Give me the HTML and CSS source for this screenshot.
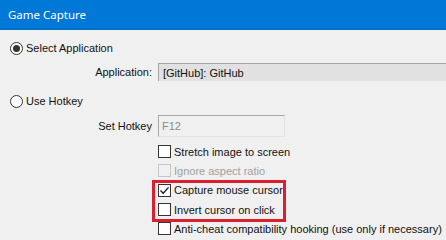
FILE: index.html
```html
<!DOCTYPE html>
<html lang="en">
<head>
    <title>Game Capture</title>
    <link rel="stylesheet" href="styles.css">
</head>
<body>
    <div class="titlebar">Game Capture</div>
    <div class="panel">
        <div class="radio-row first">
            <span class="radio checked"></span>
            <span>Select Application</span>
        </div>
        <div class="form-row app-row">
            <span class="label">Application:</span>
            <div class="combo">[GitHub]: GitHub</div>
        </div>
        <div class="radio-row second">
            <span class="radio"></span>
            <span>Use Hotkey</span>
        </div>
        <div class="form-row hotkey-row">
            <span class="label">Set Hotkey</span>
            <div class="hotkey">F12</div>
        </div>
        <div class="checks">
            <div class="check-row">
                <span class="box"></span>
                <span>Stretch image to screen</span>
            </div>
            <div class="check-row disabled">
                <span class="box"></span>
                <span>Ignore aspect ratio</span>
            </div>
            <div class="highlight">
                <div class="check-row">
                    <span class="box">
                        <svg width="11" height="11" viewBox="0 0 11 11"><path d="M1.5 5.5 L4.2 8.3 L9.6 2.4" fill="none" stroke="#1a1a1a" stroke-width="1.3"/></svg>
                    </span>
                    <span>Capture mouse cursor</span>
                </div>
                <div class="check-row">
                    <span class="box"></span>
                    <span>Invert cursor on click</span>
                </div>
            </div>
            <div class="check-row">
                <span class="box"></span>
                <span>Anti-cheat compatibility hooking (use only if necessary)</span>
            </div>
        </div>
    </div>
</body>
</html>
```

FILE: styles.css
```css
body{
    margin: 0;
    width: 446px;
    height: 240px;
    overflow: hidden;
    background-color: #f0f0f0;
    font-family: "Liberation Sans", Arial, sans-serif;
    font-size: 11px;
    color: #111;
}
.titlebar{
    height: 28px;
    background-color: #0078d7;
    border-bottom: 2px solid #006fc8;
    color: #ffffff;
    font-family: "Noto Sans", sans-serif;
    font-size: 11.5px;
    padding-left: 8px;
    display: flex;
    align-items: center;
}
.panel{
    padding-left: 10px;
    display: flex;
    flex-direction: column;
}
.radio-row{
    display: flex;
    align-items: center;
    gap: 3px;
    height: 14px;
}
.radio-row.first{
    margin-top: 11px;
}
.radio-row.second{
    margin-top: 13px;
}
.radio{
    width: 11px;
    height: 11px;
    border: 1px solid #333;
    border-radius: 50%;
    background-color: #fff;
    display: flex;
    align-items: center;
    justify-content: center;
}
.radio.checked::after{
    content: "";
    width: 7px;
    height: 7px;
    border-radius: 50%;
    background-color: #333;
}
.form-row{
    display: grid;
    grid-template-columns: 142px 1fr;
    column-gap: 6px;
    align-items: center;
}
.label{
    text-align: right;
}
.app-row{
    margin-top: 8px;
}
.combo{
    width: 300px;
    height: 17px;
    background-color: #e1e1e1;
    border-top: 1px solid #a5a5a5;
    border-left: 1px solid #a5a5a5;
    padding-left: 4px;
    display: flex;
    align-items: center;
}
.hotkey-row{
    margin-top: 7px;
}
.hotkey{
    width: 122px;
    height: 20px;
    border: 1px solid #a8a8a8;
    border-right-color: #e3e3e3;
    border-bottom-color: #e3e3e3;
    color: #8a8a8a;
    padding-left: 3px;
    display: flex;
    align-items: center;
}
.checks{
    margin-top: 5px;
    margin-left: 148px;
    display: flex;
    flex-direction: column;
}
.check-row{
    height: 19.3px;
    display: flex;
    align-items: center;
    gap: 3px;
    white-space: nowrap;
}
.box{
    width: 11px;
    height: 11px;
    border: 1px solid #333;
    background-color: #fff;
    display: flex;
    align-items: center;
    justify-content: center;
}
.disabled{
    color: #a0a0a0;
}
.disabled .box{
    border-color: #c6c6c6;
    background-color: #f0f0f0;
}
.highlight{
    position: relative;
}
.highlight::after{
    content: "";
    position: absolute;
    top: -1px;
    bottom: -3px;
    left: -6px;
    width: 128px;
    border: 3px solid #dc1f2e;
}
```
